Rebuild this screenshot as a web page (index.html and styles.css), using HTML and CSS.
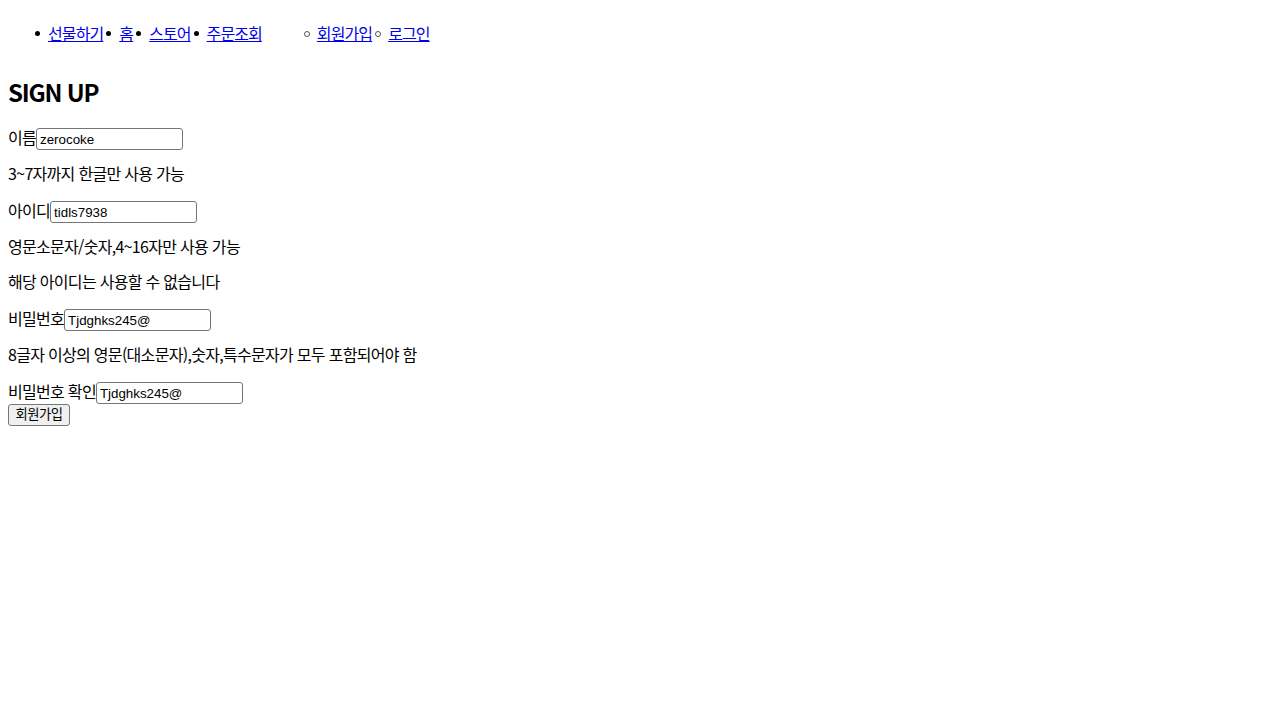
FILE: index.html
```html
<!DOCTYPE html>
<html lang="ko">
<head>
<meta charset="utf-8">
<title>SIGN UP</title>
<link rel="stylesheet" href="styles.css">
</head>
<body>
<header class="header">
  <ul class="menu">
    <li><a href="#">선물하기</a></li>
    <li><a href="#">홈</a></li>
    <li><a href="#">스토어</a></li>
    <li><a href="#">주문조회</a></li>
  </ul>
  <ul class="menu menu-user">
    <li><a href="#">회원가입</a></li>
    <li><a href="#">로그인</a></li>
  </ul>
</header>
<main>
  <h2 class="title">SIGN UP</h2>
  <form class="form">
    <div class="row"><label>이름</label><input class="field" type="text" value="zerocoke"></div>
    <p class="hint">3~7자까지 한글만 사용 가능</p>
    <div class="row"><label>아이디</label><input class="field" type="text" value="tidls7938"></div>
    <p class="hint">영문소문자/숫자,4~16자만 사용 가능</p>
    <p class="hint">해당 아이디는 사용할 수 없습니다</p>
    <div class="row"><label>비밀번호</label><input class="field" type="text" value="Tjdghks245@"></div>
    <p class="hint">8글자 이상의 영문(대소문자),숫자,특수문자가 모두 포함되어야 함</p>
    <div class="row"><label>비밀번호 확인</label><input class="field" type="text" value="Tjdghks245@"></div>
    <button class="btn" type="button">회원가입</button>
  </form>
</main>
</body>
</html>
```
FILE: styles.css
```css
html, body {
  margin: 0;
  padding: 0;
}
body {
  margin: 8px;
  font-family: "Noto Sans CJK KR", "Noto Sans", sans-serif;
  font-size: 16px;
  line-height: 19px;
  color: #000;
  background: #fff;
}
.header {
  display: flex;
  gap: 15px;
}
.menu {
  display: flex;
  gap: 16px;
  margin: 16px 0;
  padding-left: 40px;
  list-style: none;
}
.menu li {
  position: relative;
  line-height: 18px;
  padding-bottom: 1px;
}
.menu li::before {
  content: "";
  position: absolute;
  left: -13px;
  top: 7px;
  width: 5px;
  height: 5px;
  border-radius: 50%;
  background: #000;
}
.menu-user li::before {
  box-sizing: border-box;
  left: -13px;
  width: 6px;
  height: 6px;
  background: transparent;
  border: 1px solid #555;
}
.menu a {
  color: #0000ee;
  text-decoration: underline;
  letter-spacing: -0.9px;
}
.title {
  font-size: 24px;
  line-height: 26px;
  padding-bottom: 3px;
  font-weight: 700;
  letter-spacing: -1.2px;
  margin: 20px 0;
}
.row {
  display: flex;
  align-items: center;
  height: 22px;
}
.row label {
  letter-spacing: -0.7px;
  line-height: 15px;
  padding-bottom: 4px;
}
.hint {
  margin: 16px 0;
  letter-spacing: -0.7px;
  line-height: 15px;
  padding-bottom: 4px;
}
.field {
  box-sizing: border-box;
  width: 147px;
  height: 22px;
  padding: 1px 3px;
  border: 1px solid #767676;
  border-radius: 3px;
  font-family: "Liberation Sans", Arial, sans-serif;
  font-size: 13.33px;
  color: #000;
  background: #fff;
}
.btn {
  box-sizing: border-box;
  display: block;
  width: 62px;
  height: 22px;
  padding: 0 6px 2px;
  border: 1px solid #767676;
  border-radius: 3px;
  background: #efefef;
  font-family: "Noto Sans CJK KR", sans-serif;
  font-size: 13.33px;
  line-height: 16px;
  color: #000;
  letter-spacing: -0.5px;
}
```
